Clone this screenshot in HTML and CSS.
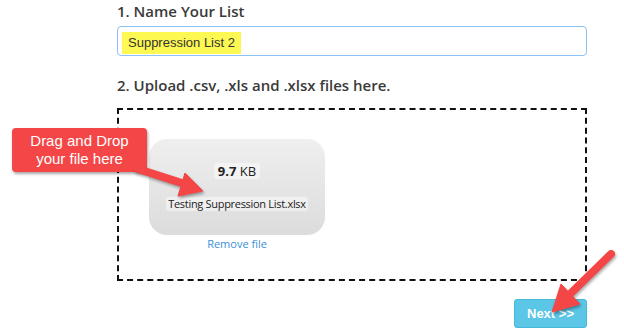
FILE: index.html
```html
<!DOCTYPE html>
<html lang="en">
  <head>
    <meta charset="UTF-8" />
    <title>Upload Suppression List</title>
    <link rel="stylesheet" href="styles.css">
  </head>
  <body>
    <div class="form">
      <h3 class="step">1. Name Your List</h3>
      <div class="name_input"><span class="mark">Suppression List 2</span></div>

      <h3 class="step step_two">2. Upload .csv, .xls and .xlsx files here.</h3>
      <div class="dropzone">
        <div class="preview">
          <div class="card">
            <div class="size"><strong>9.7</strong> KB</div>
            <div class="filename">Testing Suppression List.xlsx</div>
          </div>
          <a class="remove" href="#">Remove file</a>
        </div>
      </div>

      <div class="actions">
        <button class="next">Next &gt;&gt;</button>
      </div>
    </div>

    <div class="callout">Drag and Drop<br />your file here</div>

    <svg class="arrows" width="624" height="329" viewBox="0 0 624 329">
      <g class="arrow">
        <line x1="138" y1="169" x2="188" y2="185" />
        <polygon points="203,191 185,173 178,196" />
      </g>
      <g class="arrow">
        <line x1="611" y1="254" x2="570" y2="294" />
        <polygon points="552,312 561,284 580,304" />
      </g>
    </svg>
  </body>
</html>
```

FILE: styles.css
```css
* {
  margin: 0;
  padding: 0;
  box-sizing: border-box;
}
body {
  position: relative;
  width: 624px;
  height: 329px;
  overflow: hidden;
  background-color: #fff;
  font-family: "Open Sans", "Liberation Sans", sans-serif;
  color: #333;
}
.form {
  width: 470px;
  margin-left: 117px;
}
.step {
  font-size: 15px;
  font-weight: 600;
  line-height: 22px;
  color: #3a3a3a;
}
.step_two {
  margin-top: 18px;
}
.name_input {
  height: 30px;
  margin-top: 4px;
  padding: 3px 4px;
  border: 1px solid #8cc3f2;
  border-radius: 4px;
}
.mark {
  display: inline-block;
  height: 22px;
  line-height: 22px;
  padding: 0 6px;
  background-color: #fdf852;
  font-family: "Liberation Sans", Arial, sans-serif;
  font-size: 13px;
  color: #333;
}
.dropzone {
  height: 173px;
  margin-top: 12px;
  padding: 29px 30px;
  border: 2px dashed #111;
}
.preview {
  width: 176px;
  text-align: center;
}
.card {
  height: 96px;
  padding-top: 20px;
  border-radius: 18px;
  background: linear-gradient(#efefef, #dcdcdc);
}
.size,
.filename {
  display: inline-block;
  border-radius: 3px;
  background-color: rgba(255, 255, 255, 0.45);
  color: #222;
  white-space: nowrap;
}
.size {
  height: 16px;
  line-height: 16px;
  padding: 0 4px;
  font-size: 13px;
}
.filename {
  margin-top: 16px;
  padding: 0 2px;
  height: 14px;
  line-height: 14px;
  font-size: 11px;
  letter-spacing: -0.3px;
}
.remove {
  display: block;
  margin-top: 1px;
  font-size: 11px;
  color: #3b8fd8;
  text-decoration: none;
}
.actions {
  display: flex;
  justify-content: flex-end;
  margin-top: 18px;
}
.next {
  width: 73px;
  height: 29px;
  border: 1px solid #46b8da;
  border-radius: 3px;
  background-color: #5bc6e6;
  color: #fff;
  font-family: "Liberation Sans", Arial, sans-serif;
  font-size: 13px;
  font-weight: bold;
}
.callout {
  position: absolute;
  left: 12px;
  top: 128px;
  width: 135px;
  height: 44px;
  padding-top: 4px;
  border-radius: 4px;
  background-color: #f44646;
  box-shadow: 1px 2px 3px rgba(0, 0, 0, 0.35);
  color: #fff;
  font-family: "Liberation Sans", Arial, sans-serif;
  font-size: 15px;
  line-height: 18px;
  text-align: center;
}
.arrows {
  position: absolute;
  left: 0;
  top: 0;
}
.arrow {
  fill: #f44646;
  stroke: #f44646;
  filter: drop-shadow(1px 2px 1.5px rgba(0, 0, 0, 0.35));
}
.arrow line {
  stroke-width: 8;
  stroke-linecap: round;
}
.arrow polygon {
  stroke-width: 1;
  stroke-linejoin: round;
}
```
